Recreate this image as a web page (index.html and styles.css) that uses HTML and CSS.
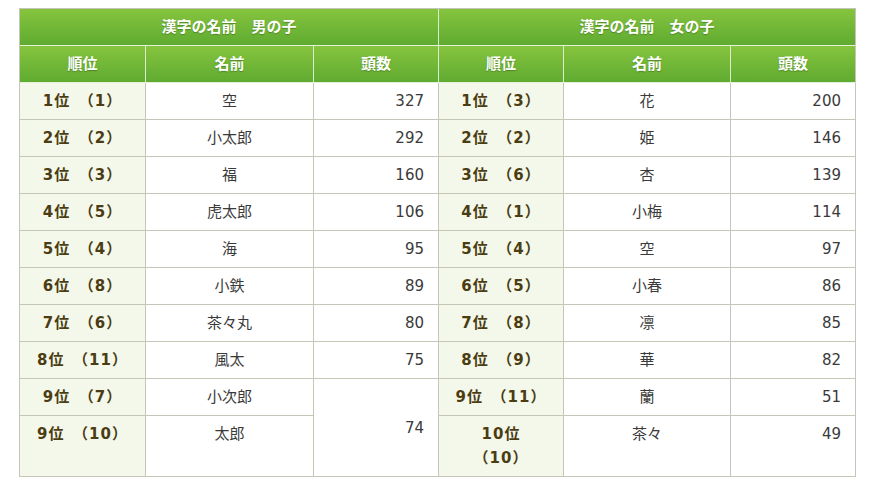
FILE: index.html
```html
<!DOCTYPE html>
<html lang="ja">
<head>
<meta charset="utf-8">
<title>漢字の名前</title>
<link rel="stylesheet" href="styles.css">
</head>
<body>
<table class="ranking">
  <colgroup>
    <col class="c-rank-l"><col class="c-name-l"><col class="c-count-l">
    <col class="c-rank-r"><col class="c-name-r"><col class="c-count-r">
  </colgroup>
  <thead>
    <tr>
      <th colspan="3">漢字の名前　男の子</th>
      <th colspan="3" class="last">漢字の名前　女の子</th>
    </tr>
    <tr>
      <th>順位</th><th>名前</th><th>頭数</th>
      <th>順位</th><th>名前</th><th class="last">頭数</th>
    </tr>
  </thead>
  <tbody>
    <tr><td class="rank">1位　（1）</td><td class="name">空</td><td class="num">327</td><td class="rank">1位　（3）</td><td class="name">花</td><td class="num">200</td></tr>
    <tr><td class="rank">2位　（2）</td><td class="name">小太郎</td><td class="num">292</td><td class="rank">2位　（2）</td><td class="name">姫</td><td class="num">146</td></tr>
    <tr><td class="rank">3位　（3）</td><td class="name">福</td><td class="num">160</td><td class="rank">3位　（6）</td><td class="name">杏</td><td class="num">139</td></tr>
    <tr><td class="rank">4位　（5）</td><td class="name">虎太郎</td><td class="num">106</td><td class="rank">4位　（1）</td><td class="name">小梅</td><td class="num">114</td></tr>
    <tr><td class="rank">5位　（4）</td><td class="name">海</td><td class="num">95</td><td class="rank">5位　（4）</td><td class="name">空</td><td class="num">97</td></tr>
    <tr><td class="rank">6位　（8）</td><td class="name">小鉄</td><td class="num">89</td><td class="rank">6位　（5）</td><td class="name">小春</td><td class="num">86</td></tr>
    <tr><td class="rank">7位　（6）</td><td class="name">茶々丸</td><td class="num">80</td><td class="rank">7位　（8）</td><td class="name">凛</td><td class="num">85</td></tr>
    <tr><td class="rank">8位　（11）</td><td class="name">風太</td><td class="num">75</td><td class="rank">8位　（9）</td><td class="name">華</td><td class="num">82</td></tr>
    <tr><td class="rank">9位　（7）</td><td class="name">小次郎</td><td class="num mid" rowspan="2">74</td><td class="rank">9位　（11）</td><td class="name">蘭</td><td class="num">51</td></tr>
    <tr><td class="rank">9位　（10）</td><td class="name">太郎</td><td class="rank">10位<br>（10）</td><td class="name">茶々</td><td class="num">49</td></tr>
  </tbody>
</table>
</body>
</html>
```

FILE: styles.css
```css
html, body {
  background: #ffffff;
}
body {
  margin: 8px 0 0 19px;
  font-family: "DejaVu Sans", "Noto Sans CJK JP", sans-serif;
  font-size: 15px;
  color: #3a3a3a;
}
.ranking {
  table-layout: fixed;
  width: 837px;
  border-collapse: separate;
  border-spacing: 0;
  border-top: 1px solid #c6c6b8;
  border-left: 1px solid #c6c6b8;
}
.c-rank-l { width: 126px; }
.c-name-l { width: 168px; }
.c-count-l { width: 125px; }
.c-rank-r { width: 125px; }
.c-name-r { width: 167px; }
.c-count-r { width: 125px; }

.ranking th,
.ranking td {
  box-sizing: border-box;
  padding: 6px 14px;
  line-height: 24px;
  vertical-align: top;
}
.ranking th {
  background: linear-gradient(#86c43e, #5fab31);
  color: #ffffff;
  font-weight: bold;
  text-align: center;
  text-shadow: 0 1px 1px rgba(40, 80, 10, 0.45);
  border-right: 1px solid #dcebcc;
  border-bottom: 1px solid #e6f1da;
}
.ranking th.last {
  border-right-color: #c6c6b8;
}
.ranking td {
  border-right: 1px solid #c6c6b8;
  border-bottom: 1px solid #c6c6b8;
  background: #ffffff;
}
.ranking td.rank {
  background: #f3f8ea;
  color: #4b3c12;
  font-weight: bold;
  text-align: center;
  white-space: nowrap;
  letter-spacing: 1px;
  padding-left: 8px;
  padding-right: 8px;
}
.ranking td.name {
  text-align: center;
}
.ranking td.num {
  text-align: right;
}
.ranking td.mid {
  vertical-align: middle;
}
```
